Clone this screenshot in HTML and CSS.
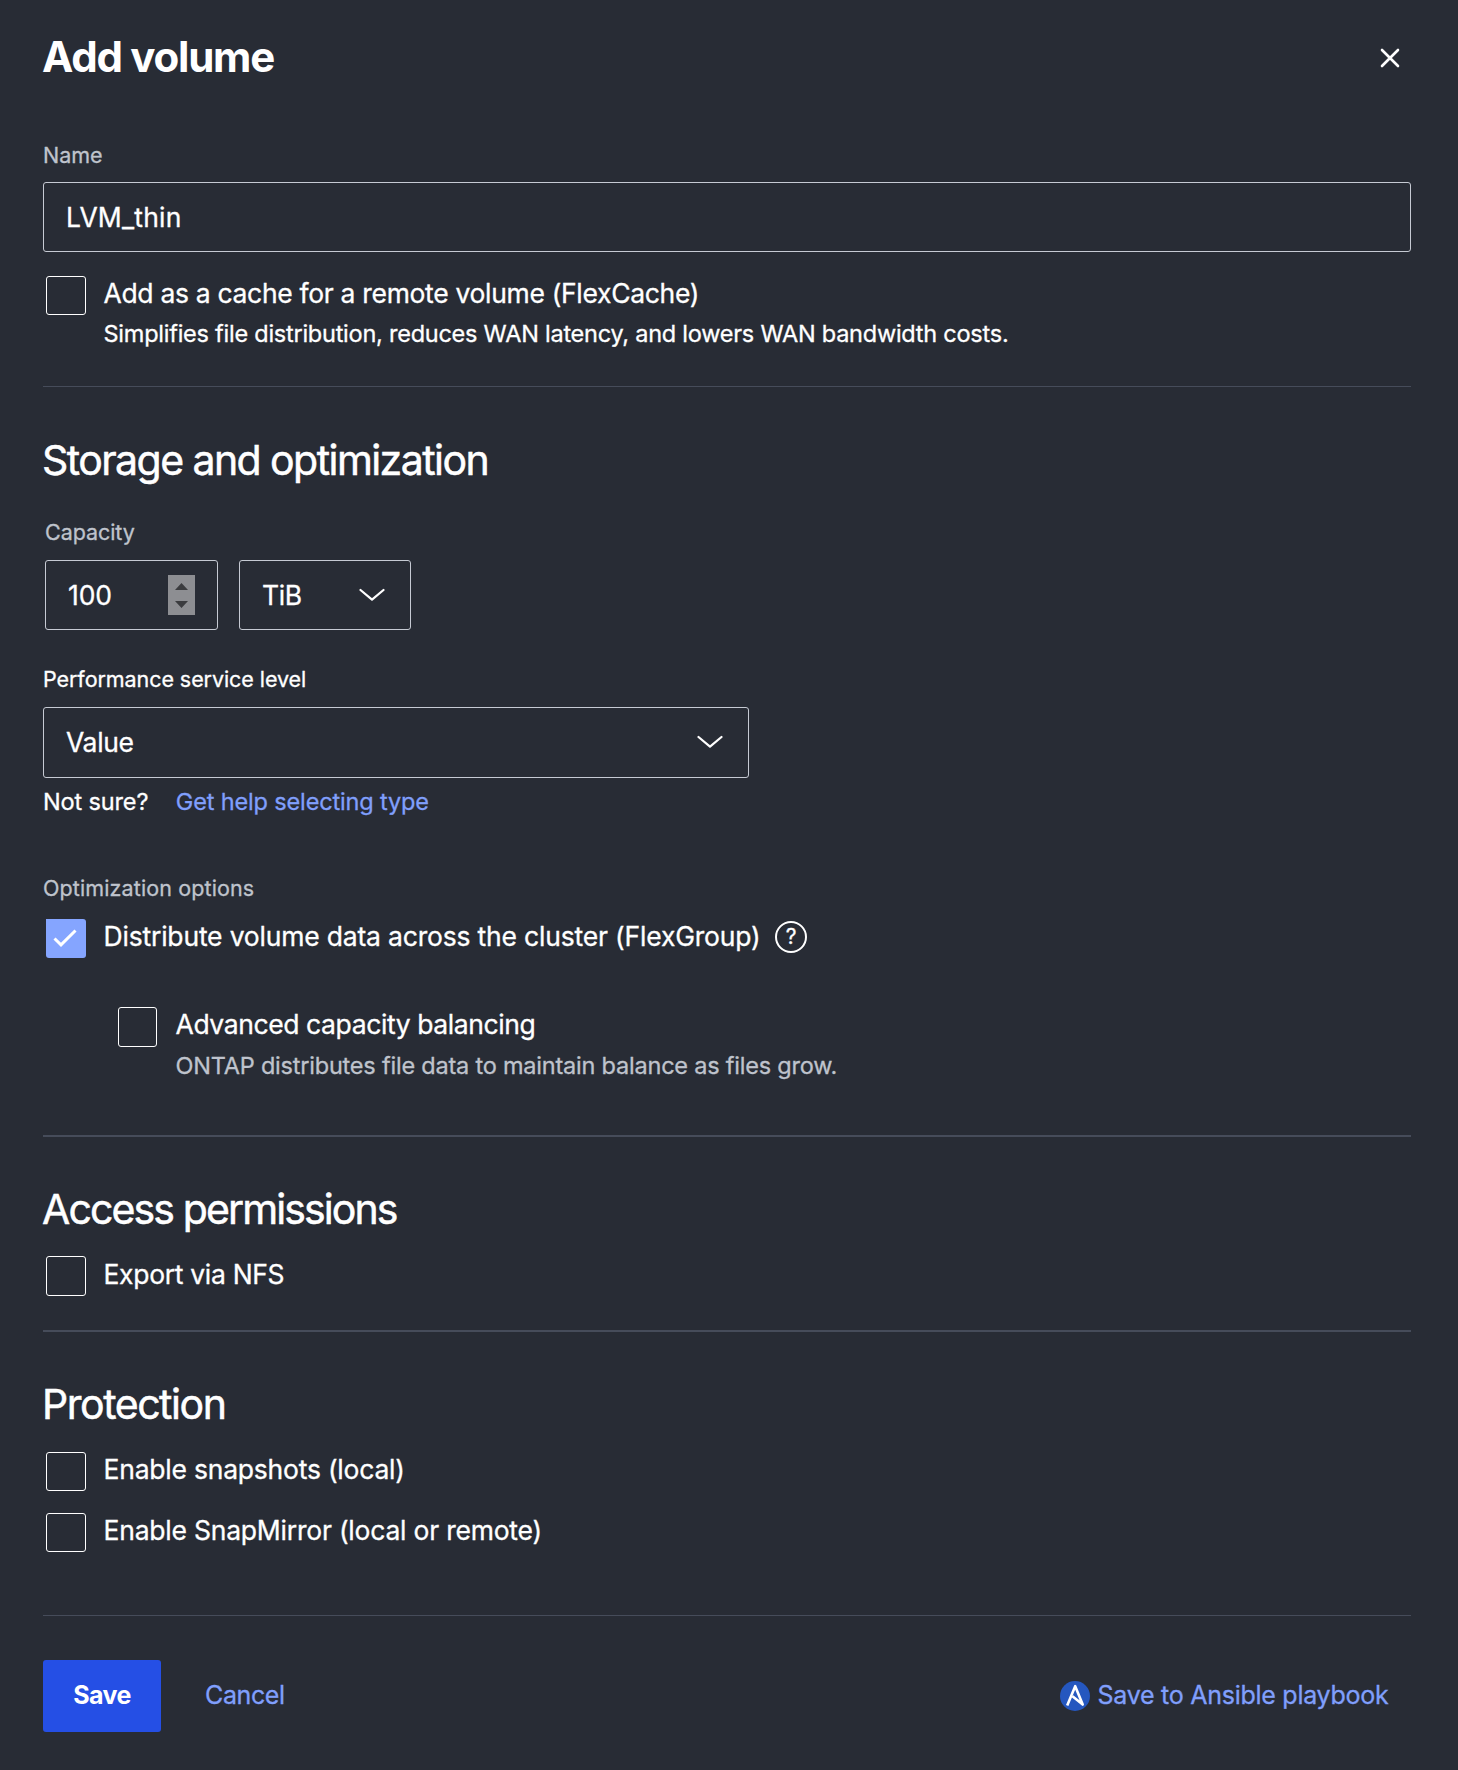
FILE: index.html
```html
<!DOCTYPE html>
<html lang="en">
<head>
<meta charset="utf-8">
<title>Add volume</title>
<link rel="stylesheet" href="styles.css">
</head>
<body>
<main class="dialog">
  <header class="dialog-header">
    <h1 class="title">Add volume</h1>
    <svg class="close" width="20" height="20" viewBox="0 0 20 20"><path d="M2 2L18 18M18 2L2 18"/></svg>
  </header>

  <section class="section section-name">
    <div class="label">Name</div>
    <div class="field field-name">LVM_thin</div>
    <div class="option option-cache">
      <i class="checkbox"></i>
      <div class="option-body">
        <div class="option-label">Add as a cache for a remote volume (FlexCache)</div>
        <div class="hint">Simplifies file distribution, reduces WAN latency, and lowers WAN bandwidth costs.</div>
      </div>
    </div>
  </section>

  <section class="section section-storage">
    <h2 class="heading">Storage and optimization</h2>
    <div class="capacity">
      <div class="label">Capacity</div>
      <div class="capacity-fields">
        <div class="field field-size"><span class="field-text">100</span>
          <svg class="spinner" width="27" height="40" viewBox="0 0 27 40"><path d="M7 15L13.5 8L20 15ZM7 26L13.5 33L20 26Z"/></svg>
        </div>
        <div class="field field-unit"><span class="field-text">TiB</span>
          <svg class="chevron" width="26" height="14" viewBox="0 0 26 14"><path d="M1.5 2L13 11.7L24.500 2"/></svg>
        </div>
      </div>
    </div>
    <div class="label label-strong">Performance service level</div>
    <div class="field field-level">Value
      <svg class="chevron" width="26" height="14" viewBox="0 0 26 14"><path d="M1.5 2L13 11.7L24.500 2"/></svg>
    </div>
    <div class="help-line">Not sure?<a class="link">Get help selecting type</a></div>
    <div class="label label-options">Optimization options</div>
    <div class="option option-group">
      <i class="checkbox checked"><svg width="40" height="39" viewBox="0 0 40 39"><path d="M8.500 19.500L15 25.800L29.500 11.500"/></svg></i>
      <div class="option-label">Distribute volume data across the cluster (FlexGroup)</div>
      <span class="help-icon">?</span>
    </div>
    <div class="option option-advanced">
      <i class="checkbox checkbox-tall"></i>
      <div class="option-body">
        <div class="option-label">Advanced capacity balancing</div>
        <div class="hint hint-muted">ONTAP distributes file data to maintain balance as files grow.</div>
      </div>
    </div>
  </section>

  <section class="section section-access">
    <h2 class="heading">Access permissions</h2>
    <div class="option">
      <i class="checkbox checkbox-nfs"></i>
      <div class="option-label">Export via NFS</div>
    </div>
  </section>

  <section class="section section-protection">
    <h2 class="heading">Protection</h2>
    <div class="option">
      <i class="checkbox"></i>
      <div class="option-label">Enable snapshots (local)</div>
    </div>
    <div class="option">
      <i class="checkbox"></i>
      <div class="option-label">Enable SnapMirror (local or remote)</div>
    </div>
  </section>

  <footer class="actions">
    <button class="save">Save</button>
    <a class="link cancel">Cancel</a>
    <a class="link ansible">
      <svg width="30" height="30" viewBox="0 0 30 30"><circle cx="15" cy="15" r="15"/><path d="M7.200 24.500L15.200 5.200L22.700 23.600L12.500 15.200"/></svg>
      <span class="ansible-text">Save to Ansible playbook</span>
    </a>
  </footer>
</main>
</body>
</html>
```
FILE: styles.css
```css
* { box-sizing: border-box; }

body {
  margin: 0;
  background: #282c35;
  color: #fff;
  font-family: Inter, "Liberation Sans", sans-serif;
  -webkit-text-stroke: 0.3px currentColor;
}

h1, h2 { margin: 0 0 0 -1px; }

.dialog {
  width: 1458px;
  height: 1770px;
  padding: 32px 47px 0 43px;
  display: flex;
  flex-direction: column;
  white-space: nowrap;
}

.dialog-header {
  display: flex;
  justify-content: space-between;
  align-items: flex-start;
  height: 109px;
}

.title { font-size: 42px; line-height: 50px; font-weight: 700; letter-spacing: -1.236px; -webkit-text-stroke: 0; }
.close { margin: 16px 11.5px 0 0; }
.close path { fill: none; stroke: #fff; stroke-width: 2.6; stroke-linecap: round; }

.section { border-bottom: 2px solid #464c5a; }
.section-name { height: 246px; border-bottom-width: 1px; }
.section-storage { height: 750px; padding-top: 48px; }
.section-access { height: 195px; padding-top: 47px; }
.section-protection { height: 284px; padding-top: 47px; border-bottom-width: 1px; }

.heading { font-size: 41px; line-height: 50px; font-weight: 400; letter-spacing: -1.56px; -webkit-text-stroke: 0.5px currentColor; }
.section-access .heading { letter-spacing: -1.88px; }
.section-protection .heading { letter-spacing: -1.46px; }

.label { font-size: 21.5px; line-height: 28px; color: #bfc3cc; letter-spacing: -0.07px; }
.label-strong { color: #fff; margin-top: 35px; }
.label-options { margin-top: 56px; letter-spacing: 0.115px; }

.field {
  display: flex;
  align-items: center;
  justify-content: space-between;
  height: 70px;
  padding: 0 22px;
  border: 1px solid #c6cad3;
  border-radius: 3px;
  font-size: 26.5px;
}
.field-text { padding-bottom: 1px; }
.field-name { margin-top: 13px; letter-spacing: 0.2px; }
.field-size { width: 173px; letter-spacing: -0.07px; }
.field-unit { width: 172px; padding-right: 25px; letter-spacing: -0.37px; }
.field-level { width: 706px; height: 71px; margin-top: 14px; padding: 0 25px 2px 22px; letter-spacing: -0.34px; }

.capacity { margin: 33px 0 0 2px; }
.capacity-fields { display: flex; gap: 21px; margin-top: 14px; }

.spinner { background: #8d8e92; }
.spinner path { fill: #3b3c3f; }
.chevron path { fill: none; stroke: #fff; stroke-width: 2.2; stroke-linecap: round; stroke-linejoin: round; }

.help-line { display: flex; gap: 27.5px; margin-top: 8px; font-size: 23.5px; line-height: 32px; letter-spacing: -0.145px; }
.link { color: #809ffc; }

.option { display: flex; align-items: flex-start; padding-left: 3px; }
.option-cache { margin-top: 23px; }
.option-group { margin-top: 16px; }
.option-advanced { margin: 48px 0 0 72px; }
.section-access .option { margin-top: 22px; }
.section-protection .option { margin-top: 22px; }
.section-protection .option + .option { margin-top: 21px; }

.checkbox {
  flex: none;
  width: 40px;
  height: 39px;
  margin: 1px 17.5px 0 0;
  border: 1px solid #fff;
  border-radius: 3px;
}
.checkbox-tall { width: 39px; height: 40px; margin-right: 18.5px; }
.checkbox-nfs { height: 40px; margin-top: 0; }
.checked { border: 0; border-radius: 0 3px 3px 3px; background: #85a5ff; }
.checked svg { display: block; }
.checked path { fill: none; stroke: #fff; stroke-width: 3; }

.option-label { font-size: 26.5px; line-height: 36px; letter-spacing: -0.22px; }
.option-cache .option-label, .section-access .option-label { letter-spacing: -0.32px; }
.option-group .option-label { letter-spacing: -0.19px; }
.option-advanced .option-label { letter-spacing: -0.4px; }
.hint { margin-top: 7px; font-size: 23.5px; line-height: 32px; letter-spacing: -0.242px; }
.hint-muted { margin-top: 8px; color: #bfc3cc; letter-spacing: -0.21px; }

.help-icon {
  width: 32px;
  height: 32px;
  margin: 3px 0 0 14.5px;
  border: 2px solid #fff;
  border-radius: 50%;
  font-size: 21px;
  line-height: 28px;
  text-align: center;
}

.actions { display: flex; align-items: center; height: 72px; margin-top: 44px; font-size: 25px; }
.save {
  width: 118px;
  height: 72px;
  padding: 0 0 2px;
  border: 0;
  border-radius: 3px;
  background: #254fe5;
  color: #fff;
  font: 700 25px Inter, sans-serif;
  letter-spacing: -0.57px;
  -webkit-text-stroke: 0;
}
.cancel { margin-left: 44px; padding-bottom: 2px; letter-spacing: -0.38px; }
.ansible { display: flex; align-items: center; gap: 7.5px; margin: 0 22.5px 0 auto; letter-spacing: -0.26px; }
.ansible-text { padding-bottom: 2px; }
.ansible circle { fill: #2557bf; }
.ansible path { fill: none; stroke: #fff; stroke-width: 2.6; stroke-linejoin: round; }
```
